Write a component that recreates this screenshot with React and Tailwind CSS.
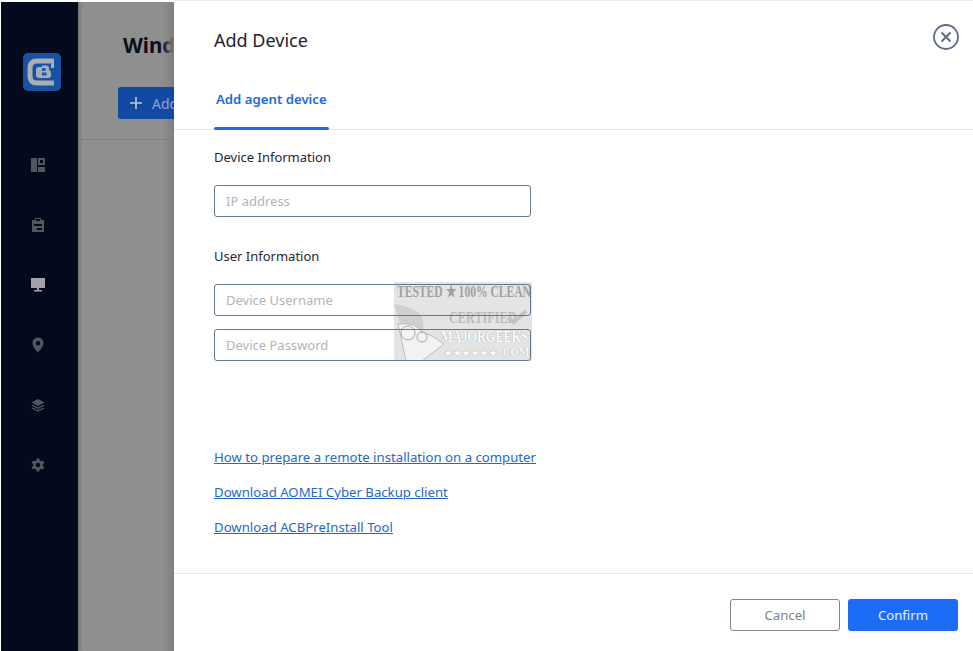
import React from "react";

const font = { fontFamily: '"Noto Sans", "Open Sans", sans-serif' };

function Logo() {
  return (
    <svg width="38" height="38" viewBox="0 0 38 38">
      <rect width="38" height="38" rx="5" fill="#1753a2" />
      <path d="M31 8H14Q7 8 7 15V23Q7 30 14 30H31" fill="none" stroke="#a9aeb5" strokeWidth="5" />
      <path d="M31 6V15H28V11" fill="#a9aeb5" />
      <path d="M13 17Q13 14 16 14H19V12.5H23Q26 12.5 26 15V17Q28 18 28 20V22Q28 25 25 25H16Q13 25 13 22Z" fill="#a9aeb5" />
      <path d="M19 15H22.5V18H19ZM19 19.5H23.5V22.5H19Z" fill="#1f5ba9" />
    </svg>
  );
}

function NavIcon({ children, active }) {
  return (
    <div className="h-[60px] flex items-center justify-center">
      <svg width="16" height="16" viewBox="0 0 16 16" fill={active ? "#a2a3a6" : "#54565f"}>{children}</svg>
    </div>
  );
}

function Sidebar() {
  return (
    <aside className="w-[77px] shrink-0 bg-[#040a1d] flex flex-col items-center">
      <div className="mt-[51px] h-[38px] translate-x-[2px]"><Logo /></div>
      <div className="mt-[44px] w-full flex flex-col pr-[3px]">
        <NavIcon>
          <path fillRule="evenodd" d="M1 1H7V15H1ZM8 1H15V8H8ZM10 3V6H13V3ZM8 10H15V15H8Z" />
        </NavIcon>
        <NavIcon>
          <path fillRule="evenodd" d="M2 3H5V1H11V3H14V15H2ZM6 2V4H10V2ZM4 7V9H12V7ZM7 11V13H12V11Z" />
        </NavIcon>
        <NavIcon active>
          <path d="M1 1H15V11H9V13H12V14.5H4V13H7V11H1Z" />
        </NavIcon>
        <NavIcon>
          <path fillRule="evenodd" d="M8 0.5C4.8 0.5 2.5 3 2.5 6C2.5 9.5 6 13 8 15.5C10 13 13.5 9.5 13.5 6C13.5 3 11.2 0.5 8 0.5ZM8 4A2.2 2.2 0 1 1 8 8.4A2.2 2.2 0 1 1 8 4Z" />
        </NavIcon>
        <NavIcon>
          <path d="M8 2L14.5 5.5L8 9L1.5 5.5Z" />
          <path d="M2.8 7.8L8 10.5L13.2 7.8L14.5 8.5L8 12L1.5 8.5Z" />
          <path d="M2.8 10.5L8 13.2L13.2 10.5L14.5 11.2L8 14.7L1.5 11.2Z" />
        </NavIcon>
        <NavIcon>
          <path fillRule="evenodd" d="M6.7 1H9.3L9.7 3A5 5 0 0 1 11 3.8L13 3.1L14.3 5.3L12.7 6.7A5 5 0 0 1 12.7 8.3L14.3 9.7L13 11.9L11 11.2A5 5 0 0 1 9.7 12L9.3 14H6.7L6.3 12A5 5 0 0 1 5 11.2L3 11.9L1.7 9.7L3.3 8.3A5 5 0 0 1 3.3 6.7L1.7 5.3L3 3.1L5 3.8A5 5 0 0 1 6.3 3ZM8 5.3A2.2 2.2 0 1 0 8 9.7A2.2 2.2 0 1 0 8 5.3Z" transform="translate(0 0.5)" />
        </NavIcon>
      </div>
    </aside>
  );
}

function Background() {
  return (
    <div className="w-[96px] shrink-0 bg-[#8f8f8f] relative overflow-hidden">
      <div className="absolute inset-y-0 right-0 w-[12px] bg-gradient-to-r from-transparent to-[#7f7f7f]" />
      <div className="absolute inset-y-0 left-0 w-[5px] bg-gradient-to-r from-[#777777] to-transparent" />
      <div className="pl-[45px] pt-[28px] h-[58px] w-[96px] overflow-hidden text-[20.5px] leading-[30px] font-bold text-[#0b0e18] whitespace-nowrap">Wind</div>
      <div className="relative ml-[40px] mt-[27px] w-[56px] h-[32px] rounded-l-[3px] bg-[#124aa3] flex items-center pl-[11px] gap-[9px] text-[14px] text-[#8ea3c8] whitespace-nowrap overflow-hidden">
        <svg width="14" height="14" viewBox="0 0 14 14" stroke="#c0c8d8" strokeWidth="1.6" className="shrink-0"><path d="M7 1V13M1 7H13" /></svg>
        Add
      </div>
      <div className="mt-[20px] h-px bg-[#808080]" />
    </div>
  );
}

function Field({ placeholder, className = "" }) {
  return (
    <div className={"relative z-10 w-[317px] h-[32px] rounded-[3px] border border-[#64788c] flex items-center pl-[11px] pt-[1px] text-[13px] text-[#b0b4ba] " + className}>
      {placeholder}
    </div>
  );
}

function Watermark() {
  return (
    <div
      className="absolute left-[394px] top-[282px] w-[138px] h-[79px] bg-[#e4e4e4] overflow-hidden text-[#a0a0a0] font-bold whitespace-nowrap"
      style={{ fontFamily: '"Liberation Serif", serif' }}
    >
      <div className="absolute left-[3px] top-0 text-[17px] leading-[20px] origin-left scale-x-[0.68]">TESTED ★ 100% CLEAN</div>
      <div className="absolute left-[55px] top-[27px] text-[17px] leading-[18px] text-[#bcbcbc] origin-left scale-x-[0.72]">CERTIFIED</div>
      <svg className="absolute left-[112px] top-[27px]" width="22" height="16" viewBox="0 0 22 16" fill="none" stroke="#c4c4c4" strokeWidth="4"><path d="M2 9L8 13L20 2" /></svg>
      <svg className="absolute left-0 top-[18px]" width="60" height="61" viewBox="0 0 60 61" fill="none">
        <path d="M0 4Q18 6 28 16L30 30L6 24Z" fill="#cfcfcf" />
        <path d="M4 24Q22 22 28 32L38 36L50 44L28 61H12Z" fill="#f2f2f2" stroke="#bbbbbb" />
        <circle cx="14" cy="33" r="7" stroke="#a8a8a8" />
        <circle cx="28" cy="37" r="5" stroke="#a8a8a8" />
      </svg>
      <div className="absolute left-[47px] top-[47px] text-[17px] leading-[16px] text-white origin-left scale-x-[0.72] [text-shadow:0_0_1px_#808080]">MAJORGEEKS</div>
      <div className="absolute left-[50px] top-[65px] text-[9px] leading-[12px] tracking-[1px] text-white [text-shadow:0_0_1px_#808080]">★★★★★★</div>
      <div className="absolute left-[106px] top-[64px] text-[12px] leading-[13px] text-white origin-left scale-x-[0.9] [text-shadow:0_0_1px_#808080]">.COM</div>
    </div>
  );
}

export default function App() {
  return (
    <div className="relative w-[973px] h-[651px] overflow-hidden bg-white flex pl-px pt-[2px]" style={font}>
      <Sidebar />
      <Background />
      <main className="flex-1 -mt-[2px] bg-white flex flex-col min-w-0 border-t border-[#ececec]">
        <header className="h-[129px] shrink-0 border-b border-[#e8e8e8] px-[40px] relative">
          <div className="pt-[24px] text-[18px] leading-[30px] text-[#1c2430]">Add Device</div>
          <div className="absolute left-[40px] bottom-[-1px] w-[115px] h-[3px] rounded-[2px] bg-[#2468dc]" />
          <div className="absolute left-[42px] top-[87px] text-[13.2px] leading-[22px] font-semibold text-[#2468dc]">Add agent device</div>
          <button className="absolute right-[13px] top-[22px]">
            <svg width="28" height="28" viewBox="0 0 28 28" fill="none" stroke="#5c6b88" strokeWidth="1.8">
              <circle cx="14" cy="14" r="12" />
              <path d="M9.5 9.5L18.5 18.5M18.5 9.5L9.5 18.5" strokeWidth="2" />
            </svg>
          </button>
        </header>
        <section className="flex-1 pl-[40px] text-[#1f2733]">
          <div className="pt-[17px] text-[13px] leading-[20px]">Device Information</div>
          <Field placeholder="IP address" className="mt-[18px]" />
          <div className="mt-[29px] text-[13px] leading-[20px]">User Information</div>
          <Field placeholder="Device Username" className="mt-[18px]" />
          <Field placeholder="Device Password" className="mt-[13px]" />
          <div className="mt-[86px] flex flex-col gap-[15px] text-[13.2px] leading-[20px] text-[#2468c8] underline">
            <a>How to prepare a remote installation on a computer</a>
            <a>Download AOMEI Cyber Backup client</a>
            <a>Download ACBPreInstall Tool</a>
          </div>
        </section>
        <footer className="h-[78px] shrink-0 border-t border-[#e8e8e8] flex justify-end items-start pt-[25px] pr-[15px] gap-[8px] text-[13.2px]">
          <button className="w-[110px] h-[32px] rounded-[3px] border border-[#7b8794] bg-white text-[#76838f] pt-[1px]">Cancel</button>
          <button className="w-[110px] h-[32px] rounded-[3px] bg-[#1d6cf5] text-[#e8f0ff] pt-[1px]">Confirm</button>
        </footer>
      </main>
      <Watermark />
    </div>
  );
}
